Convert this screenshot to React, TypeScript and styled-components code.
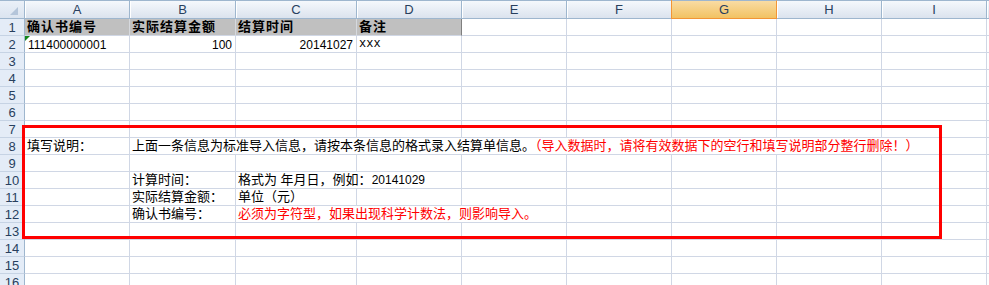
import React from 'react'
import styled, { createGlobalStyle } from 'styled-components'

const GlobalStyle = createGlobalStyle`
  html, body {
    margin: 0;
    padding: 0;
    background: #ffffff;
    overflow: hidden;
  }
  body {
    font-family: 'Liberation Sans', 'Noto Sans CJK SC', sans-serif;
    color: #000000;
  }
`

// J is only a sliver at the right edge, so its header stays blank
const COLS = ['A', 'B', 'C', 'D', 'E', 'F', 'G', 'H', 'I', '']
const WIDTHS = [105, 106, 121, 105, 105, 105, 105, 105, 105, 105]
const ROW_COUNT = 16
const GRID = '#d0d7e5'
const HEAD_LINE = '#9eb6ce'

const Sheet = styled.div`
  position: relative;
  display: grid;
  grid-template-columns: 25px ${WIDTHS.map(w => `${w}px`).join(' ')};
  grid-template-rows: 19px;
  grid-auto-rows: 17px;
  width: 989px;
  height: 285px;
  overflow: hidden;
`

const Corner = styled.div`
  display: flex;
  align-items: flex-end;
  justify-content: flex-end;
  padding: 0 6px 3px 0;
  background: linear-gradient(#eaf0f8, #dbe4f0);
  border-top: 1px solid ${HEAD_LINE};
  border-right: 1px solid ${HEAD_LINE};
  border-bottom: 1px solid ${HEAD_LINE};
`

const ColHeader = styled.div<{ $active?: boolean }>`
  position: relative;
  display: flex;
  align-items: center;
  justify-content: center;
  font-family: 'Liberation Sans', sans-serif;
  font-size: 13px;
  color: #283f5e;
  border-top: 1px solid ${HEAD_LINE};
  border-right: 1px solid ${p => (p.$active ? '#f29536' : HEAD_LINE)};
  border-bottom: 1px solid ${p => (p.$active ? '#f29536' : HEAD_LINE)};
  background: ${p => (p.$active ? 'linear-gradient(#f9dca3, #f2c263)' : 'linear-gradient(#f5f8fc, #dbe3ee)')};
  box-shadow: ${p => (p.$active ? '-1px 0 0 #f29536' : 'inset 1px 0 0 #ffffff')};
`

const RowHeader = styled.div`
  display: flex;
  align-items: center;
  justify-content: center;
  font-family: 'Liberation Sans', sans-serif;
  font-size: 13px;
  color: #283f5e;
  background: #e4ecf7;
  border-right: 1px solid ${HEAD_LINE};
  border-bottom: 1px solid #c6d3e4;
`

type Kind = 'text' | 'num' | 'mono'

const Cell = styled.div<{ $span: number; $right?: boolean; $fill?: boolean; $bold?: boolean; $edge?: boolean; $red?: boolean; $kind: Kind }>`
  position: relative;
  grid-column: span ${p => p.$span};
  padding: ${p => (p.$kind === 'num' ? '1px 3px 0 3px' : '0 3px 0 2px')};
  line-height: 16px;
  white-space: nowrap;
  text-align: ${p => (p.$right ? 'right' : 'left')};
  font-family: ${p => (p.$kind === 'mono' ? "'Liberation Mono', monospace" : "'Liberation Sans', 'Noto Sans CJK SC', sans-serif")};
  font-size: ${p => (p.$kind === 'text' ? '13px' : '12px')};
  font-weight: ${p => (p.$bold ? 700 : 400)};
  letter-spacing: ${p => (p.$bold ? '1px' : '0')};
  color: ${p => (p.$red ? '#ff0000' : '#000000')};
  background: ${p => (p.$fill ? '#c0c0c0' : '#ffffff')};
  border-right: 1px solid ${p => (p.$edge ? '#7f7f7f' : p.$fill ? '#d6d9de' : GRID)};
  border-bottom: 1px solid ${GRID};
`

const Red = styled.span`
  color: #ff0000;
`

const Num = styled.span`
  font-family: 'Liberation Sans', sans-serif;
  font-size: 12px;
`

const TextFlag = styled.span`
  position: absolute;
  top: 0;
  left: 0;
  width: 0;
  height: 0;
  border-top: 5px solid #13861b;
  border-right: 5px solid transparent;
`

const RedFrame = styled.div`
  position: absolute;
  left: 22px;
  top: 125px;
  width: 920px;
  height: 114px;
  box-sizing: border-box;
  border: 3px solid #ff0000;
  z-index: 2;
  pointer-events: none;
`

interface CellDef {
  text?: React.ReactNode
  span?: number
  right?: boolean
  fill?: boolean
  bold?: boolean
  edge?: boolean
  red?: boolean
  kind?: Kind
  flag?: boolean
}

const DATA: Record<number, CellDef[]> = {
  1: [
    { text: '确认书编号', bold: true, fill: true },
    { text: '实际结算金额', bold: true, fill: true },
    { text: '结算时间', bold: true, fill: true },
    { text: '备注', bold: true, fill: true, edge: true },
  ],
  2: [
    { text: '111400000001', kind: 'num', flag: true },
    { text: '100', kind: 'num', right: true },
    { text: '20141027', kind: 'num', right: true },
    { text: 'xxx', kind: 'mono' },
  ],
  8: [
    { text: '填写说明：' },
    {
      span: 8,
      text: (
        <>
          上面一条信息为标准导入信息，请按本条信息的格式录入结算单信息。
          <Red>（导入数据时，请将有效数据下的空行和填写说明部分整行删除！）</Red>
        </>
      ),
    },
  ],
  10: [
    {},
    { text: '计算时间：' },
    {
      span: 2,
      text: (
        <>
          格式为 年月日，例如：<Num>20141029</Num>
        </>
      ),
    },
  ],
  11: [{}, { text: '实际结算金额：' }, { text: '单位（元）' }],
  12: [{}, { text: '确认书编号：' }, { span: 3, red: true, text: '必须为字符型，如果出现科学计数法，则影响导入。' }],
}

function fillRow(defs: CellDef[] = []): CellDef[] {
  const used = defs.reduce((n, d) => n + (d.span ?? 1), 0)
  const rest: CellDef[] = Array.from({ length: COLS.length - used }, () => ({}))
  return [...defs, ...rest]
}

export default function App() {
  const rows = Array.from({ length: ROW_COUNT }, (_, i) => i + 1)

  return (
    <>
      <GlobalStyle />
      <Sheet>
        <Corner>
          <svg width="8" height="8" viewBox="0 0 8 8">
            <polygon points="8,0 8,8 0,8" fill="#b4c5da" />
          </svg>
        </Corner>
        {COLS.map((c, i) => (
          <ColHeader key={i} $active={c === 'G'}>
            {c}
          </ColHeader>
        ))}
        {rows.map(r => (
          <React.Fragment key={r}>
            <RowHeader>{r}</RowHeader>
            {fillRow(DATA[r]).map((d, i) => (
              <Cell
                key={i}
                $span={d.span ?? 1}
                $right={d.right}
                $fill={d.fill}
                $bold={d.bold}
                $edge={d.edge}
                $red={d.red}
                $kind={d.kind ?? 'text'}
              >
                {d.flag && <TextFlag />}
                {d.text}
              </Cell>
            ))}
          </React.Fragment>
        ))}
        <RedFrame />
      </Sheet>
    </>
  )
}
